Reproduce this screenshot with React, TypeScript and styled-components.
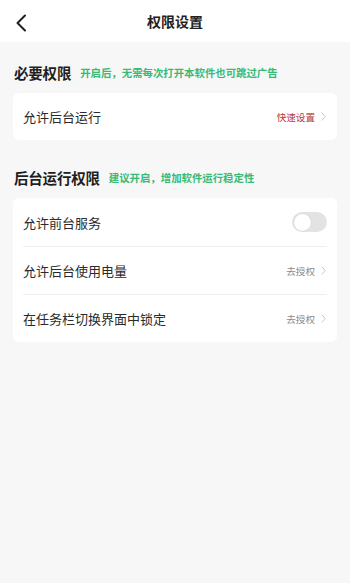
import React from "react";
import styled, { createGlobalStyle } from "styled-components";

const Global = createGlobalStyle`
  html, body { margin: 0; padding: 0; background: #f7f7f7; }
  body { font-family: "Noto Sans CJK SC", "Noto Sans", sans-serif; -webkit-font-smoothing: antialiased; }
  * { box-sizing: border-box; }
`;

const Page = styled.div`
  width: 350px;
  min-height: 583px;
  background: #f7f7f7;
`;

const Header = styled.header`
  height: 42px;
  background: #ffffff;
  display: grid;
  grid-template-columns: 40px 1fr 40px;
  align-items: center;
`;

const Back = styled.div`
  display: flex;
  align-items: center;
  padding-left: 15px;
  height: 42px;
`;

const Title = styled.h1`
  margin: 0;
  text-align: center;
  font-size: 14px;
  font-weight: 700;
  color: #222;
  line-height: 42px;
  padding-bottom: 3px;
`;

const Content = styled.main`
  padding: 19px 13px 0;
  display: flex;
  flex-direction: column;
`;

const SectionHead = styled.div<{ $top?: number }>`
  display: flex;
  align-items: center;
  height: 22px;
  margin-top: ${(p) => p.$top ?? 0}px;
  margin-bottom: 10px;
  padding-left: 1px;
`;

const SectionTitle = styled.span`
  font-size: 14.5px;
  font-weight: 700;
  color: #1e1e1e;
  letter-spacing: -0.2px;
`;

const SectionHint = styled.span`
  margin-left: 9px;
  font-size: 10.4px;
  font-weight: 700;
  color: #38ba76;
  padding-top: 1px;
`;

const Card = styled.section`
  background: #ffffff;
  border-radius: 6px;
  padding: 0 10px;
`;

const Row = styled.div<{ $divider?: boolean; $h?: number }>`
  height: ${(p) => p.$h ?? 48}px;
  display: flex;
  align-items: center;
  justify-content: space-between;
  border-top: ${(p) => (p.$divider ? "1px solid #f0f0f0" : "none")};
`;

const Label = styled.span`
  font-size: 13px;
  color: #2a2a2a;
`;

const Action = styled.span<{ $color: string }>`
  display: flex;
  align-items: center;
  gap: 6px;
  font-size: 9.6px;
  color: ${(p) => p.$color};
  padding-right: 1px;
`;

const Toggle = styled.div`
  width: 35px;
  height: 20px;
  border-radius: 10px;
  background: #e3e3e3;
  padding: 1.5px;
  display: flex;
  align-items: center;
`;

const Knob = styled.div`
  width: 17px;
  height: 17px;
  border-radius: 50%;
  background: #ffffff;
  box-shadow: 0 0 0 0.5px #d0d0d0;
`;

const Chevron = () => (
  <svg width="5" height="9" viewBox="0 0 5 9" fill="none">
    <path d="M0.8 0.8 L4.2 4.5 L0.8 8.2" stroke="#c8c8c8" strokeWidth="1" strokeLinecap="round" strokeLinejoin="round" />
  </svg>
);

const BackIcon = () => (
  <svg width="12" height="18" viewBox="0 0 12 18" fill="none">
    <path d="M10 1.5 L2.5 9 L10 16.5" stroke="#1f1f1f" strokeWidth="2" strokeLinecap="round" strokeLinejoin="round" />
  </svg>
);

export default function App() {
  return (
    <Page>
      <Global />
      <Header>
        <Back>
          <BackIcon />
        </Back>
        <Title>权限设置</Title>
        <span />
      </Header>
      <Content>
        <SectionHead>
          <SectionTitle>必要权限</SectionTitle>
          <SectionHint>开启后，无需每次打开本软件也可跳过广告</SectionHint>
        </SectionHead>
        <Card>
          <Row $h={47}>
            <Label>允许后台运行</Label>
            <Action $color="#b8373c">
              快速设置
              <Chevron />
            </Action>
          </Row>
        </Card>

        <SectionHead $top={26}>
          <SectionTitle>后台运行权限</SectionTitle>
          <SectionHint>建议开启，增加软件运行稳定性</SectionHint>
        </SectionHead>
        <Card>
          <Row>
            <Label>允许前台服务</Label>
            <Toggle>
              <Knob />
            </Toggle>
          </Row>
          <Row $divider>
            <Label>允许后台使用电量</Label>
            <Action $color="#8a8a8a">
              去授权
              <Chevron />
            </Action>
          </Row>
          <Row $divider>
            <Label>在任务栏切换界面中锁定</Label>
            <Action $color="#8a8a8a">
              去授权
              <Chevron />
            </Action>
          </Row>
        </Card>
      </Content>
    </Page>
  );
}
